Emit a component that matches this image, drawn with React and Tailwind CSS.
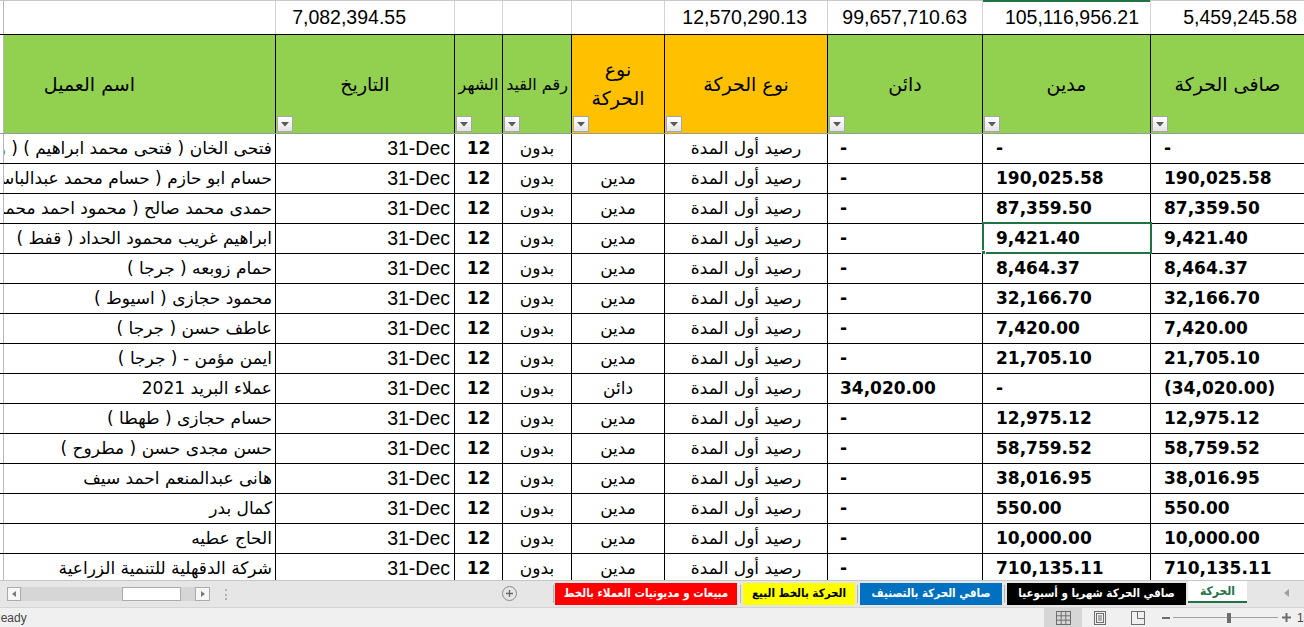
import React from 'react';

// column template: edge strip, name, date, month, entry no, type (2 lines), type, credit, debit, net
const GRID = 'grid grid-cols-[4px_271px_179px_48px_69px_93px_163px_155px_168px_154px]';
const NUM = "font-['Liberation_Sans',Arial,sans-serif]";
const AR = "font-['DejaVu_Sans',sans-serif]";
const AR_TAB = "font-['DejaVu_Sans_Condensed','DejaVu_Sans',sans-serif]";
const BOLD = "font-['DejaVu_Sans',sans-serif] font-bold";

const rows = [
  { name: 'فتحى الخان ( فتحى محمد ابراهيم ) ( وائل )', kind: '', credit: '-', debit: '-', net: '-' },
  { name: 'حسام ابو حازم ( حسام محمد عبدالباسط )', kind: 'مدين', credit: '-', debit: '190,025.58', net: '190,025.58' },
  { name: 'حمدى محمد صالح ( محمود احمد محمد )', kind: 'مدين', credit: '-', debit: '87,359.50', net: '87,359.50' },
  { name: 'ابراهيم غريب محمود الحداد ( قفط )', kind: 'مدين', credit: '-', debit: '9,421.40', net: '9,421.40', selected: true },
  { name: 'حمام زوبعه ( جرجا )', kind: 'مدين', credit: '-', debit: '8,464.37', net: '8,464.37' },
  { name: 'محمود حجازى ( اسيوط )', kind: 'مدين', credit: '-', debit: '32,166.70', net: '32,166.70' },
  { name: 'عاطف حسن ( جرجا )', kind: 'مدين', credit: '-', debit: '7,420.00', net: '7,420.00' },
  { name: 'ايمن مؤمن  -  ( جرجا )', kind: 'مدين', credit: '-', debit: '21,705.10', net: '21,705.10' },
  { name: 'عملاء البريد 2021', kind: 'دائن', credit: '34,020.00', debit: '-', net: '(34,020.00)' },
  { name: 'حسام حجازى ( طهطا )', kind: 'مدين', credit: '-', debit: '12,975.12', net: '12,975.12' },
  { name: 'حسن مجدى حسن ( مطروح )', kind: 'مدين', credit: '-', debit: '58,759.52', net: '58,759.52' },
  { name: 'هانى عبدالمنعم احمد سيف', kind: 'مدين', credit: '-', debit: '38,016.95', net: '38,016.95' },
  { name: 'كمال بدر', kind: 'مدين', credit: '-', debit: '550.00', net: '550.00' },
  { name: 'الحاج عطيه', kind: 'مدين', credit: '-', debit: '10,000.00', net: '10,000.00' },
  { name: 'شركة الدقهلية للتنمية الزراعية', kind: 'مدين', credit: '-', debit: '710,135.11', net: '710,135.11' },
];

const FilterButton = () => (
  <div className="absolute left-[1px] bottom-[1px] w-[16px] h-[16px] border border-[#a6a6a6] bg-gradient-to-b from-white to-[#e4e4e4] flex items-center justify-center">
    <svg width="8" height="5" viewBox="0 0 8 5"><path d="M0 0h8L4 4.5z" fill="#595959" /></svg>
  </div>
);

const HeaderCell = ({ children, orange, small }) => (
  <div className={`relative border-l border-black flex items-center justify-center text-center ${orange ? 'bg-[#ffc000]' : 'bg-[#92d050]'}`}>
    <span dir="rtl" className={`${AR} ${small ? 'text-[16px] whitespace-nowrap' : 'text-[19px]'} leading-[29px] text-black`}>{children}</span>
    <FilterButton />
  </div>
);

const Tab = ({ children, className }) => (
  <div dir="rtl" className={`h-[22px] mt-[2px] flex items-center justify-center ${AR_TAB} font-bold text-[11.5px] whitespace-nowrap ${className}`}>
    {children}
  </div>
);

const Sep = ({ className }) => <div className={`w-px h-[18px] mt-[4px] bg-[#b4b4b4] ${className}`} />;

export default function App() {
  return (
    <div className="w-[1304px] h-[627px] overflow-hidden bg-white flex flex-col">
      {/* sheet */}
      <div className="relative h-[580px] overflow-hidden">
        {/* totals row */}
        <div className={`${GRID} h-[34px] border-t border-[#c8c8c8] ${NUM} text-[19.5px] text-black`}>
          <div className="border-r border-[#b8b8b8]" />
          <div />
          <div className="border-l border-[#d4d4d4] flex items-center justify-end pr-[48px]">7,082,394.55</div>
          <div className="border-l border-[#d4d4d4]" />
          <div className="border-l border-[#d4d4d4]" />
          <div className="border-l border-[#d4d4d4]" />
          <div className="border-l border-[#d4d4d4] flex items-center justify-end pr-[20px]">12,570,290.13</div>
          <div className="border-l border-[#d4d4d4] flex items-center justify-end pr-[15px]">99,657,710.63</div>
          <div className="relative border-l border-[#d4d4d4] flex items-center justify-end pr-[11px]">
            <div className="absolute left-0 right-0 -top-px h-[2px] bg-[#217346]" />
            105,116,956.21
          </div>
          <div className="border-l border-[#d4d4d4] flex items-center justify-end pr-[7px]">5,459,245.58</div>
        </div>

        {/* header row */}
        <div className={`${GRID} h-[100px] border-t border-black border-b border-b-[#9a9a9a]`}>
          <div className="border-r border-[#b8b8b8] bg-white" />
          <div className="bg-[#92d050] flex items-center justify-end pr-[140px]">
            <span dir="rtl" className={`${AR} text-[19px]`}>اسم العميل</span>
          </div>
          <HeaderCell>التاريخ</HeaderCell>
          <HeaderCell small>الشهر</HeaderCell>
          <HeaderCell small>رقم القيد</HeaderCell>
          <HeaderCell orange>نوع<br />الحركة</HeaderCell>
          <HeaderCell orange>نوع الحركة</HeaderCell>
          <HeaderCell>دائن</HeaderCell>
          <HeaderCell>مدين</HeaderCell>
          <HeaderCell>صافى الحركة</HeaderCell>
        </div>

        {/* data rows */}
        {rows.map((r, i) => (
          <div key={i} className={`${GRID} h-[30px] border-b border-black text-black`}>
            <div className="border-r border-[#b8b8b8] bg-white" />
            <div dir="rtl" className={`overflow-hidden whitespace-nowrap text-right pr-[3px] ${AR} text-[17px] leading-[29px]`}>{r.name}</div>
            <div className={`border-l border-black flex items-center justify-end pr-[4px] ${NUM} text-[19.5px]`}>31-Dec</div>
            <div className={`border-l border-black flex items-center justify-center ${BOLD} text-[17px]`}>12</div>
            <div className={`border-l border-black flex items-center justify-center ${AR} text-[17px]`} dir="rtl">بدون</div>
            <div className={`border-l border-black flex items-center justify-center ${AR} text-[17px]`} dir="rtl">{r.kind}</div>
            <div className={`border-l border-black flex items-center justify-center ${AR} text-[17px]`} dir="rtl">رصيد أول المدة</div>
            <div className={`border-l border-black flex items-center pl-[12px] ${BOLD} text-[17px]`}>{r.credit}</div>
            <div className={`relative border-l border-black flex items-center pl-[13px] ${BOLD} text-[17px]`}>
              {r.debit}
              {r.selected && (
                <div className="absolute -left-px -right-[2px] -top-[2px] -bottom-px border-2 border-[#217346]">
                  <div className="absolute -left-[3px] -bottom-[3px] w-[5px] h-[5px] bg-[#217346] border border-white" />
                </div>
              )}
            </div>
            <div className={`border-l border-black flex items-center pl-[13px] ${BOLD} text-[17px]`}>{r.net}</div>
          </div>
        ))}
      </div>

      {/* sheet tabs bar */}
      <div className="h-[27px] border-t border-[#c6c6c6] bg-[#e6e6e6] flex items-start">
        <div className="w-[7px]" />
        <div className="mt-[6px] w-[14px] h-[14px] border border-[#ababab] bg-[#f7f7f7] flex items-center justify-center">
          <svg width="4" height="6" viewBox="0 0 4 6"><path d="M4 0v6L0 3z" fill="#7a7a7a" /></svg>
        </div>
        <div className="mt-[6px] w-[174px] h-[14px] bg-[#d6d6d6] flex">
          <div className="ml-[101px] w-[59px] h-[14px] border border-[#ababab] bg-white" />
        </div>
        <div className="mt-[6px] w-[15px] h-[14px] border border-[#ababab] bg-[#f7f7f7] flex items-center justify-center">
          <svg width="4" height="6" viewBox="0 0 4 6"><path d="M0 0v6l4-3z" fill="#7a7a7a" /></svg>
        </div>
        <div className="ml-[15px] mt-[8px] w-[2px] h-[11px] flex flex-col justify-between">
          <div className="w-[2px] h-[2px] bg-[#b0b0b0]" />
          <div className="w-[2px] h-[2px] bg-[#b0b0b0]" />
          <div className="w-[2px] h-[2px] bg-[#b0b0b0]" />
        </div>
        <div className="ml-[275px] mt-[5px] w-[15px] h-[15px] rounded-full border border-[#8a8a8a] flex items-center justify-center">
          <svg width="9" height="9" viewBox="0 0 9 9"><path d="M4.5 1v7M1 4.5h7" stroke="#6a6a6a" strokeWidth="1.3" /></svg>
        </div>
        <Sep className="ml-[36px]" />
        <Tab className="ml-px w-[182px] bg-[#ff0000] text-white">مبيعات و مديونيات العملاء بالخط</Tab>
        <Sep className="ml-[3px]" />
        <Tab className="ml-[2px] w-[112px] bg-[#ffff00] text-black">الحركة بالخط البيع</Tab>
        <Sep className="ml-[2px]" />
        <Tab className="ml-[2px] w-[142px] bg-[#0070c0] text-white">صافي الحركة بالتصنيف</Tab>
        <Sep className="ml-[2px]" />
        <Tab className="ml-[2px] w-[179px] bg-black text-white">صافي الحركة شهريا و أسبوعيا</Tab>
        <div className="ml-[2px] w-[59px] h-[22px] bg-white border-b-2 border-[#217346] flex items-center justify-center">
          <span dir="rtl" className={`${AR_TAB} font-bold text-[12px] text-[#217346]`}>الحركة</span>
        </div>
        <div className="ml-[37px] mt-[8px]">
          <svg width="5" height="8" viewBox="0 0 5 8"><path d="M5 0v8L0 4z" fill="#a0a0a0" /></svg>
        </div>
      </div>

      {/* status bar */}
      <div className="flex-1 border-t border-[#d4d4d4] bg-[#f0f0f0] flex items-center">
        <span className={`-ml-[8px] ${NUM} text-[12px] text-[#444]`}>Ready</span>
        <div className="ml-auto h-full w-[38px] bg-[#d6d6d6] flex items-center justify-center">
          <svg width="15" height="14" viewBox="0 0 15 14">
            <rect x="0.5" y="0.5" width="14" height="13" fill="none" stroke="#6d6d6d" />
            <path d="M5.2 0.5v13M9.8 0.5v13M0.5 4.8h14M0.5 9.2h14" stroke="#6d6d6d" />
          </svg>
        </div>
        <div className="ml-[11px] w-[14px] flex items-center justify-center">
          <svg width="12" height="14" viewBox="0 0 12 14">
            <rect x="0.5" y="0.5" width="11" height="13" fill="none" stroke="#6d6d6d" />
            <rect x="2.5" y="2.5" width="7" height="9" fill="none" stroke="#6d6d6d" />
            <path d="M4 5h4M4 7h4M4 9h4" stroke="#6d6d6d" />
          </svg>
        </div>
        <div className="ml-[24px] w-[14px] flex items-center justify-center">
          <svg width="14" height="14" viewBox="0 0 14 14">
            <rect x="0.5" y="0.5" width="13" height="13" fill="none" stroke="#6d6d6d" />
            <path d="M6.5 0.5v7h7" fill="none" stroke="#6d6d6d" />
          </svg>
        </div>
        <div className="ml-[17px] w-[8px] h-[2px] bg-[#6d6d6d]" />
        <div className="ml-[3px] w-[54px] h-px bg-[#a0a0a0]" />
        <div className="w-[4px] h-[10px] bg-[#6d6d6d]" />
        <div className="w-[47px] h-px bg-[#a0a0a0]" />
        <div className="ml-[3px] w-[10px] flex items-center justify-center">
          <svg width="9" height="9" viewBox="0 0 9 9"><path d="M4.5 0v9M0 4.5h9" stroke="#6d6d6d" strokeWidth="2" /></svg>
        </div>
        <span className={`ml-[6px] w-[7px] overflow-hidden ${NUM} text-[12px] text-[#444]`}>100%</span>
      </div>
    </div>
  );
}
